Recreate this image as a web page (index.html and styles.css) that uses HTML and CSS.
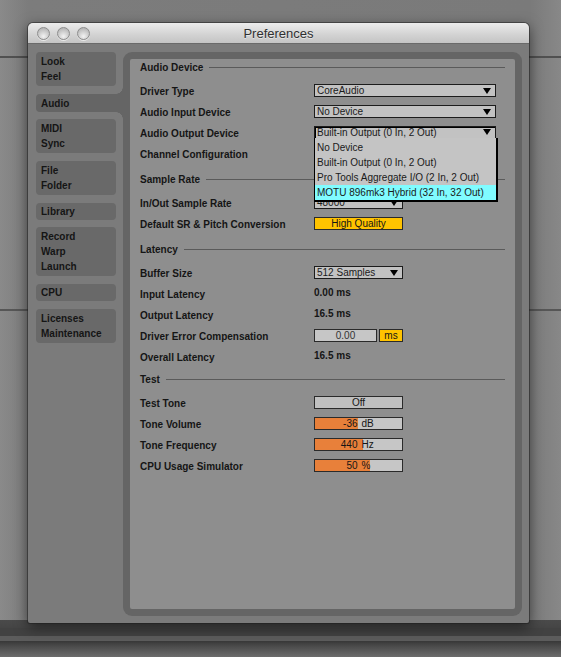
FILE: index.html
```
<!DOCTYPE html>
<html lang="en">
<head>
    <meta charset="UTF-8">
    <meta name="viewport" content="width=device-width, initial-scale=1.0">
    <title>Preferences</title>
    <link rel="stylesheet" href="styles.css">
</head>
<body>
    <div class="window">
        <div class="titlebar">
            <div class="lights"><span></span><span></span><span></span></div>
            <div class="title">Preferences</div>
            <div></div>
        </div>
        <div class="window-body">
            <nav class="tabs">
                <div class="tab">Look<br>Feel</div>
                <div class="tab single active">Audio</div>
                <div class="tab">MIDI<br>Sync</div>
                <div class="tab">File<br>Folder</div>
                <div class="tab single">Library</div>
                <div class="tab">Record<br>Warp<br>Launch</div>
                <div class="tab single">CPU</div>
                <div class="tab">Licenses<br>Maintenance</div>
            </nav>
            <div class="panel">
                <div class="panel-inner">
                    <section class="group">
                        <h2 class="group-title">Audio Device</h2>
                        <div class="row">
                            <span class="label">Driver Type</span>
                            <div class="select wide">CoreAudio</div>
                        </div>
                        <div class="row">
                            <span class="label">Audio Input Device</span>
                            <div class="select wide">No Device</div>
                        </div>
                        <div class="row">
                            <span class="label">Audio Output Device</span>
                            <div class="select wide open">Built-in Output (0 In, 2 Out)
                                <ul class="menu">
                                    <li>No Device</li>
                                    <li>Built-in Output (0 In, 2 Out)</li>
                                    <li>Pro Tools Aggregate I/O (2 In, 2 Out)</li>
                                    <li class="hover">MOTU 896mk3 Hybrid (32 In, 32 Out)</li>
                                </ul>
                            </div>
                        </div>
                        <div class="row">
                            <span class="label">Channel Configuration</span>
                        </div>
                    </section>

                    <section class="group">
                        <h2 class="group-title">Sample Rate</h2>
                        <div class="row">
                            <span class="label">In/Out Sample Rate</span>
                            <div class="select">48000</div>
                        </div>
                        <div class="row">
                            <span class="label">Default SR &amp; Pitch Conversion</span>
                            <div class="toggle on">High Quality</div>
                        </div>
                    </section>

                    <section class="group">
                        <h2 class="group-title">Latency</h2>
                        <div class="row">
                            <span class="label">Buffer Size</span>
                            <div class="select">512 Samples</div>
                        </div>
                        <div class="row">
                            <span class="label">Input Latency</span>
                            <span class="value">0.00 ms</span>
                        </div>
                        <div class="row">
                            <span class="label">Output Latency</span>
                            <span class="value">16.5 ms</span>
                        </div>
                        <div class="row">
                            <span class="label">Driver Error Compensation</span>
                            <div class="pair">
                                <div class="number">0.00</div>
                                <div class="toggle on unit">ms</div>
                            </div>
                        </div>
                        <div class="row">
                            <span class="label">Overall Latency</span>
                            <span class="value">16.5 ms</span>
                        </div>
                    </section>

                    <section class="group tight">
                        <h2 class="group-title">Test</h2>
                        <div class="row">
                            <span class="label">Test Tone</span>
                            <div class="toggle">Off</div>
                        </div>
                        <div class="row">
                            <span class="label">Tone Volume</span>
                            <div class="meter" style="--fill: 49%"><span>-36</span><span>dB</span></div>
                        </div>
                        <div class="row">
                            <span class="label">Tone Frequency</span>
                            <div class="meter" style="--fill: 55%"><span>440</span><span>Hz</span></div>
                        </div>
                        <div class="row">
                            <span class="label">CPU Usage Simulator</span>
                            <div class="meter" style="--fill: 63%"><span>50</span><span>%</span></div>
                        </div>
                    </section>
                </div>
            </div>
        </div>
    </div>
</body>
</html>
```

FILE: styles.css
```
html {
    box-sizing: border-box;
    height: 100%;
}

*,
*::before,
*::after {
    box-sizing: inherit;
    margin: 0;
    padding: 0;
}

body {
    height: 100%;
    overflow: hidden;
    padding: 23px 0 0 28px;
    font-family: 'Liberation Sans', Arial, sans-serif;
    color: #151515;
    background:
        linear-gradient(to bottom, transparent 56px, #505050 56px, #505050 58px, transparent 58px),
        linear-gradient(to bottom, transparent 309px, #565656 309px, #565656 311px, transparent 311px),
        linear-gradient(to bottom, transparent 620px, #4a4a4a 620px, #454545 628px, #424242 628px, #424242 636px, #5c5c5c 636px, #5c5c5c 641px, #383838 641px, #4a4a4a 646px, #6c6c6c 657px),
        linear-gradient(to right, #8a8a8a, #7c7c7c 28px, #7a7a7a 530px, #888888);
}

/* window frame */

.window {
    width: 501px;
    height: 600px;
    background: #7b7b7b;
    border-radius: 5px 5px 2px 2px;
    box-shadow: 0 0 0 1px rgba(30, 30, 30, 0.5), 0 4px 14px rgba(0, 0, 0, 0.55);
    display: flex;
    flex-direction: column;
}

.titlebar {
    height: 21px;
    display: grid;
    grid-template-columns: 1fr auto 1fr;
    align-items: center;
    background: linear-gradient(#ececec, #d2d2d2 60%, #c4c4c4);
    border-radius: 5px 5px 0 0;
    border-bottom: 1px solid #6a6a6a;
}

.lights {
    display: flex;
    gap: 7px;
    padding-left: 9px;
}

.lights span {
    width: 13px;
    height: 13px;
    border-radius: 50%;
    border: 1px solid #8e8e8e;
    background: radial-gradient(circle at 50% 75%, #f2f2f2, #c9c9c9 55%, #a9a9a9);
    box-shadow: 0 1px 0 rgba(255, 255, 255, 0.6);
}

.title {
    font-size: 13px;
    color: #303030;
    text-shadow: 0 1px 0 rgba(255, 255, 255, 0.5);
}

.window-body {
    flex: 1;
    display: flex;
    gap: 7px;
    padding: 8px 7px 7px 8px;
}

/* sidebar */

.tabs {
    width: 80px;
    display: flex;
    flex-direction: column;
    gap: 7.7px;
}

.tab {
    background: #696969;
    border-radius: 4px;
    padding: 2px 5px;
    font-size: 10px;
    font-weight: bold;
    line-height: 15px;
}

.tab.single {
    padding: 1px 5px;
}

.tab.active {
    position: relative;
    width: 87px;
    background: #656565;
    border-radius: 4px 0 0 4px;
    padding: 2px 5px 1px;
}

.tab.active::before,
.tab.active::after {
    content: "";
    position: absolute;
    right: 0;
    width: 7px;
    height: 7px;
}

.tab.active::before {
    bottom: 100%;
    background: radial-gradient(circle at 0 0, transparent 6.5px, #656565 7px);
}

.tab.active::after {
    top: 100%;
    background: radial-gradient(circle at 0 100%, transparent 6.5px, #656565 7px);
}

/* content panel */

.panel {
    flex: 1;
    background: #656565;
    border-radius: 9px;
    padding: 7px;
}

.panel-inner {
    height: 100%;
    background: #8e8e8e;
    border-radius: 2px;
    padding: 0 10px;
}

.group {
    margin-bottom: 7px;
}

.group.tight {
    margin-top: -3px;
}

.group-title {
    height: 16px;
    margin-bottom: 5px;
    display: flex;
    align-items: center;
    gap: 6px;
    font-size: 10px;
    font-weight: bold;
}

.group-title::after {
    content: "";
    flex: 1;
    height: 1px;
    background: #5a5a5a;
}

.row {
    height: 21px;
    display: grid;
    grid-template-columns: 174px 1fr;
    align-items: center;
}

.label {
    font-size: 10px;
    font-weight: bold;
    padding-top: 1px;
}

.value {
    font-size: 10px;
    font-weight: bold;
    margin-top: -2px;
}

/* controls */

.select {
    position: relative;
    width: 89px;
    height: 13px;
    display: flex;
    justify-content: space-between;
    align-items: center;
    padding: 0 4px 0 2px;
    background: #c2c2c2;
    border: 1px solid #1c1c1c;
    font-size: 10px;
    line-height: 11px;
    color: #1a1a1a;
}

.select::after {
    content: "";
    border-left: 4px solid transparent;
    border-right: 4px solid transparent;
    border-top: 6px solid #000;
}

.select.wide {
    width: 182px;
}

.select.open {
    height: 14px;
    border-bottom-width: 2px;
    box-shadow: inset 1px 1px 0 #000;
}

.menu {
    position: absolute;
    top: 100%;
    left: -1px;
    width: 184px;
    list-style: none;
    background: #c4c4c4;
    border: 1px solid #000;
    border-width: 0 2px 2px 1px;
    padding-top: 2px;
    z-index: 2;
}

.menu li {
    height: 15px;
    line-height: 15px;
    padding-left: 2px;
    font-size: 10px;
}

.menu li.hover {
    background: #80fcff;
}

.toggle {
    width: 89px;
    height: 13px;
    background: #c0c0c0;
    border: 1px solid #2a2a2a;
    font-size: 10px;
    line-height: 11px;
    text-align: center;
}

.toggle.on {
    background: #ffc300;
}

.pair {
    display: flex;
    gap: 2px;
}

.number {
    width: 63px;
    height: 13px;
    background: #c6c6c6;
    border: 1px solid #2a2a2a;
    font-size: 10px;
    line-height: 11px;
    text-align: center;
    color: #333;
}

.toggle.unit {
    width: 24px;
}

.meter {
    width: 89px;
    height: 13px;
    display: grid;
    grid-template-columns: 1fr 1fr;
    border: 1px solid #2a2a2a;
    background: linear-gradient(to right, #e8803a var(--fill), #c6c6c6 var(--fill));
    font-size: 10px;
    line-height: 11px;
}

.meter span:first-child {
    text-align: right;
    padding-right: 1px;
}

.meter span:last-child {
    padding-left: 3px;
}
```
